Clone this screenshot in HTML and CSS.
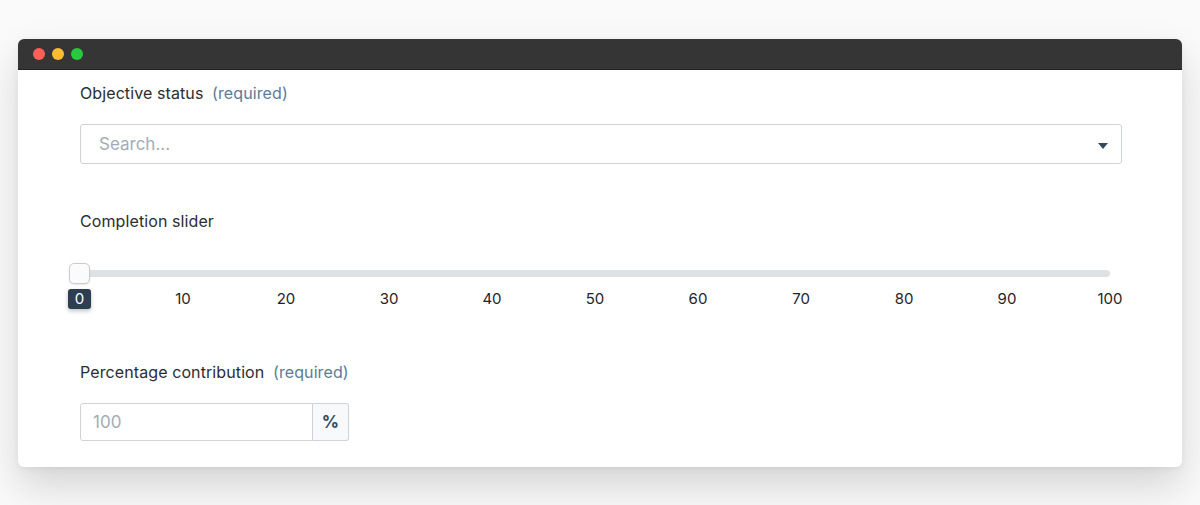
FILE: index.html
```html
<!DOCTYPE html>
<html>
<head>
<meta charset="utf-8">
<link rel="stylesheet" href="styles.css">
</head>
<body>
<div class="window">
  <div class="titlebar">
    <span class="dot red"></span><span class="dot yellow"></span><span class="dot green"></span>
  </div>
  <div class="content">
    <div class="label">Objective status <span class="req">(required)</span></div>
    <div class="select">
      <span class="placeholder">Search...</span>
      <span class="caret"></span>
    </div>

    <div class="label label-slider">Completion slider</div>
    <div class="slider">
      <div class="track"><span class="handle"></span></div>
      <div class="ticks">
        <span class="tick active">0</span>
        <span class="tick">10</span>
        <span class="tick">20</span>
        <span class="tick">30</span>
        <span class="tick">40</span>
        <span class="tick">50</span>
        <span class="tick">60</span>
        <span class="tick">70</span>
        <span class="tick">80</span>
        <span class="tick">90</span>
        <span class="tick">100</span>
      </div>
    </div>

    <div class="label label-pct">Percentage contribution <span class="req">(required)</span></div>
    <div class="group">
      <div class="pct-input">100</div>
      <div class="addon">%</div>
    </div>
  </div>
</div>
</body>
</html>
```
FILE: styles.css
```css
html, body {
  margin: 0;
  padding: 0;
  background: #fafafa;
  font-family: Inter, "Noto Sans", sans-serif;
}
body {
  padding: 39px 18px 0;
  height: 505px;
  box-sizing: border-box;
  overflow: hidden;
}
.window {
  background: #fff;
  border-radius: 6px;
  box-shadow: 0 20px 40px rgba(0,0,0,0.15), 0 2px 6px rgba(0,0,0,0.06);
  overflow: hidden;
}
.titlebar {
  height: 30px;
  background: #353535;
  border-bottom: 1px solid #222;
  display: flex;
  align-items: center;
  padding-left: 15px;
  gap: 7px;
}
.dot {
  width: 12px;
  height: 12px;
  border-radius: 50%;
  display: inline-block;
}
.red { background: #fe5f57; }
.yellow { background: #febc2e; }
.green { background: #28c840; }
.content {
  padding: 12px 60px 26px 62px;
}
.label {
  font-size: 16px;
  font-weight: 400;
  line-height: 22px;
  color: #2a2d31;
  letter-spacing: 0.1px;
}
.req {
  color: #5e7a94;
  margin-left: 4px;
}
.select {
  margin-top: 20px;
  height: 40px;
  box-sizing: border-box;
  border: 1px solid #cfd3d6;
  border-radius: 3px;
  display: flex;
  align-items: center;
  justify-content: space-between;
  padding: 0 13px 0 18px;
}
.placeholder {
  font-size: 17px;
  color: #a3acb6;
}
.caret {
  width: 0;
  height: 0;
  border-left: 5px solid transparent;
  border-right: 5px solid transparent;
  border-top: 6px solid #35495e;
  margin-top: 3px;
}
.label-slider {
  margin-top: 46px;
}
.slider {
  margin-top: 38px;
  width: 1030px;
}
.track {
  position: relative;
  height: 7px;
  background: #dfe2e5;
  border-radius: 4px;
  margin-top: 8px;
}
.handle {
  position: absolute;
  left: -11px;
  top: -7px;
  width: 19px;
  height: 19px;
  background: #fbfbfc;
  border: 1px solid #c9cdd1;
  border-radius: 5px;
  box-shadow: 0 1px 2px rgba(0,0,0,0.1);
}
.ticks {
  display: flex;
  justify-content: space-between;
  margin: 12px -20px 0;
}
.tick {
  width: 40px;
  text-align: center;
  font-size: 15px;
  line-height: 20px;
  color: #1f2328;
}
.tick.active {
  color: transparent;
  position: relative;
}
.tick.active::after {
  content: "0";
  position: absolute;
  left: 8px;
  top: 0;
  width: 23px;
  height: 20px;
  background: #2c3e50;
  color: #fff;
  border-radius: 3px;
  box-shadow: 0 2px 4px rgba(0,0,0,0.25);
}
.label-pct {
  margin-top: 52px;
}
.group {
  margin-top: 20px;
  display: flex;
  height: 38px;
}
.pct-input {
  width: 233px;
  box-sizing: border-box;
  border: 1px solid #cfd3d6;
  border-radius: 3px 0 0 3px;
  padding-left: 12px;
  font-size: 17px;
  line-height: 36px;
  color: #a3acb6;
}
.addon {
  width: 36px;
  box-sizing: border-box;
  border: 1px solid #cfd3d6;
  border-left: none;
  border-radius: 0 3px 3px 0;
  background: #f8f9fa;
  text-align: center;
  font-size: 17px;
  font-weight: 700;
  line-height: 36px;
  color: #35495e;
}
```
